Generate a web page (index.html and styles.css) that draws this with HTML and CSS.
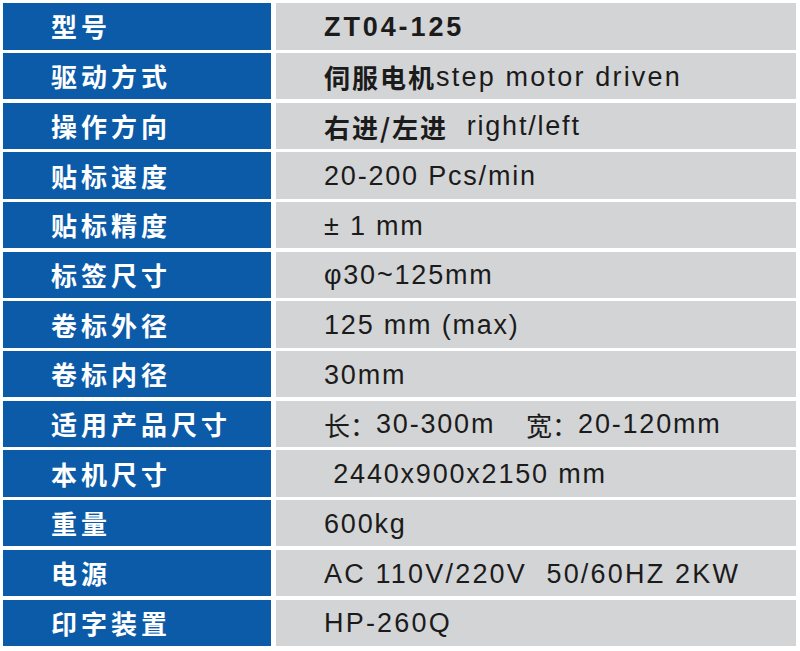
FILE: index.html
```html
<!DOCTYPE html>
<html lang="zh-CN">
<head>
<meta charset="utf-8">
<title>ZT04-125</title>
<link rel="stylesheet" href="styles.css">
</head>
<body>
<div class="spec">
  <div class="label">型号</div><div class="value"><b class="model">ZT04-125</b></div>
  <div class="label">驱动方式</div><div class="value"><b class="cjk">伺服电机</b><span class="wide">step motor driven</span></div>
  <div class="label">操作方向</div><div class="value"><b class="cjk">右进/左进</b>  right/left</div>
  <div class="label">贴标速度</div><div class="value">20-200 Pcs/min</div>
  <div class="label">贴标精度</div><div class="value">± 1 mm</div>
  <div class="label">标签尺寸</div><div class="value">φ30~125mm</div>
  <div class="label">卷标外径</div><div class="value">125 mm (max)</div>
  <div class="label">卷标内径</div><div class="value">30mm</div>
  <div class="label">适用产品尺寸</div><div class="value"><span class="cj">长：</span>30-300m   <span class="cj cj-gap">宽：</span>20-120mm</div>
  <div class="label">本机尺寸</div><div class="value"> 2440x900x2150 mm</div>
  <div class="label">重量</div><div class="value">600kg</div>
  <div class="label">电源</div><div class="value"><span class="wide">AC 110V/220V  50/60HZ 2KW</span></div>
  <div class="label">印字装置</div><div class="value"><span class="wide">HP-260Q</span></div>
</div>
</body>
</html>
```
FILE: styles.css
```css
html, body {
  margin: 0;
  padding: 0;
  background: #ffffff;
}

body {
  width: 800px;
  height: 651px;
  overflow: hidden;
}

.spec {
  display: grid;
  grid-template-columns: 268px 520px;
  grid-auto-rows: 46.3px;
  column-gap: 5px;
  row-gap: 3.4px;
  padding: 3.3px 4px 5px 3px;
}

.label {
  background: #0b5ba9;
  color: #ffffff;
  font-family: "Noto Sans CJK SC", sans-serif;
  font-weight: 700;
  font-size: 26px;
  letter-spacing: 4px;
  display: flex;
  align-items: center;
  padding-left: 48px;
  line-height: 1;
}

.value {
  background: #d3d4d6;
  color: #1b1b1b;
  font-family: "Liberation Sans", Arial, "Noto Sans CJK SC", sans-serif;
  font-size: 27px;
  letter-spacing: 1.8px;
  display: flex;
  align-items: center;
  padding-left: 48px;
  padding-top: 2px;
  white-space: pre;
  line-height: 1;
}

.value b {
  font-weight: 700;
}

.model {
  letter-spacing: 2.9px;
}

.wide {
  letter-spacing: 2.2px;
}

.cjk {
  font-family: "Noto Sans CJK SC", sans-serif;
  font-weight: 700;
  font-size: 26px;
  letter-spacing: 2px;
}

.cj {
  font-family: "Noto Sans CJK SC", sans-serif;
  font-weight: 400;
  font-size: 26px;
  letter-spacing: 0;
}

.cj-gap {
  margin-left: 3px;
}
```
